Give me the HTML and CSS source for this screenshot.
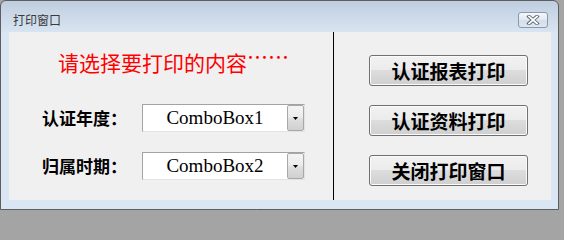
FILE: index.html
```html
<!DOCTYPE html>
<html lang="zh-CN">
<head>
<meta charset="utf-8">
<title>打印窗口</title>
<link rel="stylesheet" href="styles.css">
</head>
<body>
<div class="window">
  <div class="titlebar">
    <span class="title">打印窗口</span>
    <span class="close">
      <svg width="14" height="10" viewBox="0 0 14 10">
        <path d="M3 1.5 L11 8.5 M11 1.5 L3 8.5" stroke="#55606e" stroke-width="3.6" stroke-linecap="square" fill="none"/>
        <path d="M3 1.5 L11 8.5 M11 1.5 L3 8.5" stroke="#ffffff" stroke-width="1.8" stroke-linecap="square" fill="none"/>
      </svg>
    </span>
  </div>
  <div class="client">
    <div class="left">
      <div class="heading">请选择要打印的内容<span class="dots">……</span></div>
      <div class="form">
        <span class="label">认证年度：</span>
        <div class="combo">
          <span class="combo-text">ComboBox1</span>
          <span class="combo-btn"><svg width="5" height="3" viewBox="0 0 5 3"><path d="M0 0 H5 L2.5 3 Z" fill="#000"/></svg></span>
        </div>
        <span class="label">归属时期：</span>
        <div class="combo">
          <span class="combo-text">ComboBox2</span>
          <span class="combo-btn"><svg width="5" height="3" viewBox="0 0 5 3"><path d="M0 0 H5 L2.5 3 Z" fill="#000"/></svg></span>
        </div>
      </div>
    </div>
    <div class="divider"></div>
    <div class="right">
      <button class="btn">认证报表打印</button>
      <button class="btn">认证资料打印</button>
      <button class="btn">关闭打印窗口</button>
    </div>
  </div>
</div>
</body>
</html>
```
FILE: styles.css
```css
html, body {
  margin: 0;
  height: 100%;
}
body {
  background: #a4a4a4;
  font-family: "Noto Sans CJK SC", sans-serif;
}
.window {
  width: 559px;
  height: 210px;
  box-sizing: border-box;
  border: 1px solid #5e5e5e;
  border-radius: 6px 6px 0 0;
  background: linear-gradient(#bfcee0 0, #d8e4f1 31px, #dae6f3 31px);
  padding: 0 7px 9px 8px;
  display: flex;
  flex-direction: column;
}
.titlebar {
  height: 31px;
  display: flex;
  justify-content: space-between;
  align-items: flex-start;
  flex: none;
}
.title {
  font-size: 12px;
  line-height: 16px;
  margin: 11px 0 0 4px;
  color: #3a3a3a;
}
.close {
  width: 30px;
  height: 16px;
  box-sizing: border-box;
  margin: 11px 3px 0 0;
  border: 1px solid #8a98ab;
  border-radius: 3px;
  background: linear-gradient(#f4f7fb, #e3e9f1 50%, #d5dee9 50%, #dde5ef);
  display: flex;
  align-items: center;
  justify-content: center;
}
.client {
  height: 168px;
  background: #f0f0f0;
  display: flex;
  flex: none;
}
.left {
  width: 324px;
}
.divider {
  width: 1px;
  background: #000;
}
.right {
  flex: 1;
  display: flex;
  flex-direction: column;
  align-items: flex-start;
  gap: 19px;
  padding: 23px 0 0 35px;
}
.heading {
  margin: 12px 0 0 49px;
  font-size: 21px;
  line-height: 24px;
  height: 24px;
  color: #ff0000;
  white-space: nowrap;
}
.dots {
  vertical-align: 0.3em;
}
.form {
  display: grid;
  grid-template-columns: 100px 163px;
  row-gap: 20px;
  margin: 36px 0 0 33px;
  align-items: center;
}
.label {
  font-size: 17px;
  font-weight: bold;
  line-height: 28px;
  color: #000;
  white-space: nowrap;
}
.combo {
  height: 28px;
  box-sizing: border-box;
  border: 1px solid;
  border-color: #a3a3a3 #e3e3e3 #e3e3e3 #a3a3a3;
  background: #fff;
  display: flex;
}
.combo-text {
  flex: 1;
  text-align: center;
  font-family: "Liberation Serif", serif;
  font-size: 19px;
  line-height: 26px;
  color: #000;
}
.combo-btn {
  width: 17px;
  height: 26px;
  box-sizing: border-box;
  border: 1px solid #a8a8a8;
  border-radius: 2px;
  background: linear-gradient(#f4f4f4, #ececec 45%, #dedede 55%, #d0d0d0);
  display: flex;
  align-items: center;
  justify-content: center;
}
.btn {
  width: 159px;
  height: 31px;
  box-sizing: border-box;
  margin: 0;
  padding: 0;
  border: 1px solid #707070;
  border-radius: 3px;
  background: linear-gradient(#f2f2f2 0%, #ebebeb 50%, #dddddd 50%, #cfcfcf 100%);
  box-shadow: inset 0 0 0 1px #fbfbfb;
  font-family: "Noto Sans CJK SC", sans-serif;
  font-size: 19px;
  font-weight: bold;
  line-height: 29px;
  color: #000;
}
```
